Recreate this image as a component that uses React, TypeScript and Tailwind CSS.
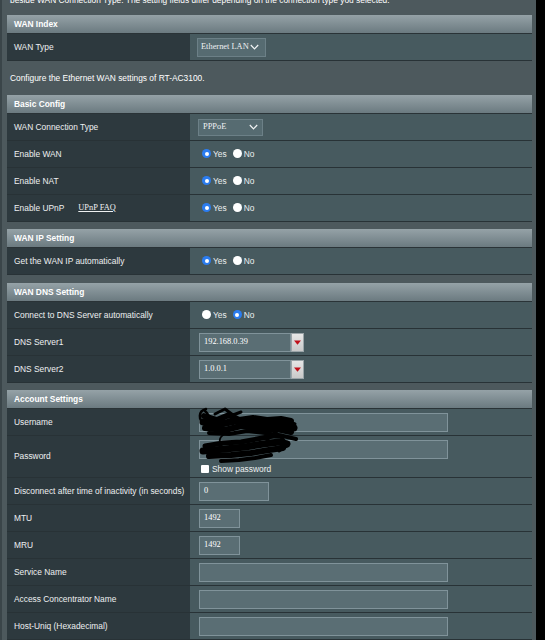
import type { ReactNode } from 'react'

function Header({ title }: { title: string }) {
  return (
    <div className="h-[19px] border-b border-[#2a3337] bg-[linear-gradient(#95a2a7,#6b7a80)] pl-[7px] flex items-center text-[8.4px] font-bold text-white">
      {title}
    </div>
  )
}

function Row({ label, children, tall }: { label: ReactNode; children?: ReactNode; tall?: boolean }) {
  return (
    <div className={`flex border-b border-[#283236] ${tall ? 'h-[42px]' : 'h-[27px]'}`}>
      <div className="w-[183px] shrink-0 bg-[#2d393e] pl-[7px] flex items-center text-[#eef0f1]">{label}</div>
      <div className="flex-1 bg-[#475a5f] pl-[9px] flex items-center">{children}</div>
    </div>
  )
}

function Radio({ checked }: { checked?: boolean }) {
  return checked ? (
    <span className="w-[9px] h-[9px] shrink-0 rounded-full bg-[#2b7cf0] flex items-center justify-center">
      <span className="w-[4px] h-[4px] rounded-full bg-white" />
    </span>
  ) : (
    <span className="block w-[9px] h-[9px] shrink-0 rounded-full bg-white" />
  )
}

function YesNo({ yes }: { yes: boolean }) {
  return (
    <div className="flex items-center ml-[3px] text-[#eceeef]">
      <Radio checked={yes} />
      <span className="ml-[2px]">Yes</span>
      <span className="ml-[6px] flex">
        <Radio checked={!yes} />
      </span>
      <span className="ml-[2px]">No</span>
    </div>
  )
}

function Chevron() {
  return (
    <svg width="9" height="6" viewBox="0 0 9 6" className="shrink-0">
      <path d="M0.8 1 L4.5 4.8 L8.2 1" fill="none" stroke="#f2f4f5" strokeWidth="1.2" />
    </svg>
  )
}

function TextInput({ value = '', w }: { value?: string; w: string }) {
  return (
    <div
      className={`${w} h-[19px] bg-[#5a6e74] border border-[#80939a] pl-[4px] flex items-center text-white font-['Liberation_Serif','Times_New_Roman',serif]`}
    >
      {value}
    </div>
  )
}

function DnsInput({ value }: { value: string }) {
  return (
    <div className="flex items-center">
      <TextInput value={value} w="w-[92px]" />
      <div className="w-[13px] h-[19px] bg-[linear-gradient(#e6e6e6,#c9c9c9)] border border-[#9aa4a8] flex items-center justify-center">
        <svg width="7" height="5" viewBox="0 0 7 5">
          <path d="M0 0.5 H7 L3.5 4.8 Z" fill="#c0101a" />
        </svg>
      </div>
    </div>
  )
}

function Scribble() {
  return (
    <svg
      width="104"
      height="62"
      viewBox="0 0 104 62"
      className="absolute left-[188px] top-[16px] pointer-events-none"
    >
      <g fill="none" stroke="#000" strokeLinecap="round" strokeLinejoin="round">
        <path d="M11 3 C3 5 3 14 10 19 C17 23 16 10 10 5" strokeWidth="2.5" />
        <path d="M9 10 L22 14 L34 9 L44 14 L58 12 L72 14 L86 13 L96 15" strokeWidth="6" />
        <path d="M8 16 L26 18 L40 15 L56 18 L72 17 L88 19 L99 22" strokeWidth="7" />
        <path d="M10 22 L30 24 L46 20 L64 23 L82 23 L96 26" strokeWidth="6" />
        <path d="M14 27 L34 28 L52 25 L70 27 L88 30 L101 33" strokeWidth="4" />
        <path d="M20 8 L30 3 L38 9 L46 6" strokeWidth="3" />
        <path d="M90 14 L100 18 L94 24" strokeWidth="3" />
        <path d="M30 28 C22 32 24 38 30 44" strokeWidth="1.8" />
        <path d="M10 40 L28 37 L46 36 L62 33 L78 30 L86 30" strokeWidth="5" />
        <path d="M8 45 L30 43 L50 41 L68 38 L84 36 L92 38" strokeWidth="7" />
        <path d="M14 50 L36 49 L56 47 L74 44 L88 42" strokeWidth="6" />
        <path d="M26 55 L44 54 L60 52 L76 49" strokeWidth="4" />
        <path d="M72 34 L80 26 L88 33 L92 40 L84 45" strokeWidth="3" />
      </g>
    </svg>
  )
}

export default function App() {
  return (
    <div className="w-[545px] h-[640px] bg-black overflow-hidden flex font-['Liberation_Sans',Arial,sans-serif] text-[8.4px]">
      <div className="w-[536px] h-full bg-[#4d595d] border-l-2 border-[#3a4549] pl-[5px] pr-[4px]">
        <div className="-mt-[7px] leading-[14px] pl-[3px] text-white">
          beside WAN Connection Type. The setting fields differ depending on the connection type you selected.
        </div>

        <div className="mt-[8px]">
          <Header title="WAN Index" />
          <Row label="WAN Type">
            <div className="-ml-[2px] w-[69px] h-[19px] bg-[#566b71] border border-[#6c8087] pl-[3px] flex items-center gap-[1px] text-[#eef0f1] font-['Liberation_Serif','Times_New_Roman',serif]">
              <span>Ethernet LAN</span>
              <Chevron />
            </div>
          </Row>
        </div>

        <div className="h-[34px] flex items-center pl-[3px] text-white">
          Configure the Ethernet WAN settings of RT-AC3100.
        </div>

        <div>
          <Header title="Basic Config" />
          <Row label="WAN Connection Type">
            <div className="-ml-[1px] w-[65px] h-[17px] bg-[#566b71] border border-[#6c8087] pl-[4px] pr-[4px] flex items-center justify-between text-[#eef0f1] font-['Liberation_Serif','Times_New_Roman',serif]">
              <span>PPPoE</span>
              <Chevron />
            </div>
          </Row>
          <Row label="Enable WAN">
            <YesNo yes />
          </Row>
          <Row label="Enable NAT">
            <YesNo yes />
          </Row>
          <Row
            label={
              <span className="flex items-center">
                Enable UPnP
                <span className="ml-[14px] underline font-['Liberation_Serif','Times_New_Roman',serif]">UPnP FAQ</span>
              </span>
            }
          >
            <YesNo yes />
          </Row>
        </div>

        <div className="mt-[7px]">
          <Header title="WAN IP Setting" />
          <Row label="Get the WAN IP automatically">
            <YesNo yes />
          </Row>
        </div>

        <div className="mt-[8px]">
          <Header title="WAN DNS Setting" />
          <Row label="Connect to DNS Server automatically">
            <YesNo yes={false} />
          </Row>
          <Row label="DNS Server1">
            <DnsInput value="192.168.0.39" />
          </Row>
          <Row label="DNS Server2">
            <DnsInput value="1.0.0.1" />
          </Row>
        </div>

        <div className="mt-[7px] relative">
          <Header title="Account Settings" />
          <Row label="Username">
            <TextInput w="w-[249px]" />
          </Row>
          <Row label="Password" tall>
            <div className="flex flex-col">
              <div className="mt-[2px]">
                <TextInput w="w-[249px]" />
              </div>
              <div className="flex items-center mt-[4px] ml-[2px] text-[#eef0f1]">
                <span className="w-[8px] h-[8px] rounded-[1px] bg-white" />
                <span className="ml-[3px]">Show password</span>
              </div>
            </div>
          </Row>
          <Row label="Disconnect after time of inactivity (in seconds)">
            <TextInput value="0" w="w-[70px]" />
          </Row>
          <Row label="MTU">
            <TextInput value="1492" w="w-[41px]" />
          </Row>
          <Row label="MRU">
            <TextInput value="1492" w="w-[41px]" />
          </Row>
          <Row label="Service Name">
            <TextInput w="w-[249px]" />
          </Row>
          <Row label="Access Concentrator Name">
            <TextInput w="w-[249px]" />
          </Row>
          <Row label="Host-Uniq (Hexadecimal)">
            <TextInput w="w-[249px]" />
          </Row>
          <Scribble />
        </div>
      </div>
    </div>
  )
}
